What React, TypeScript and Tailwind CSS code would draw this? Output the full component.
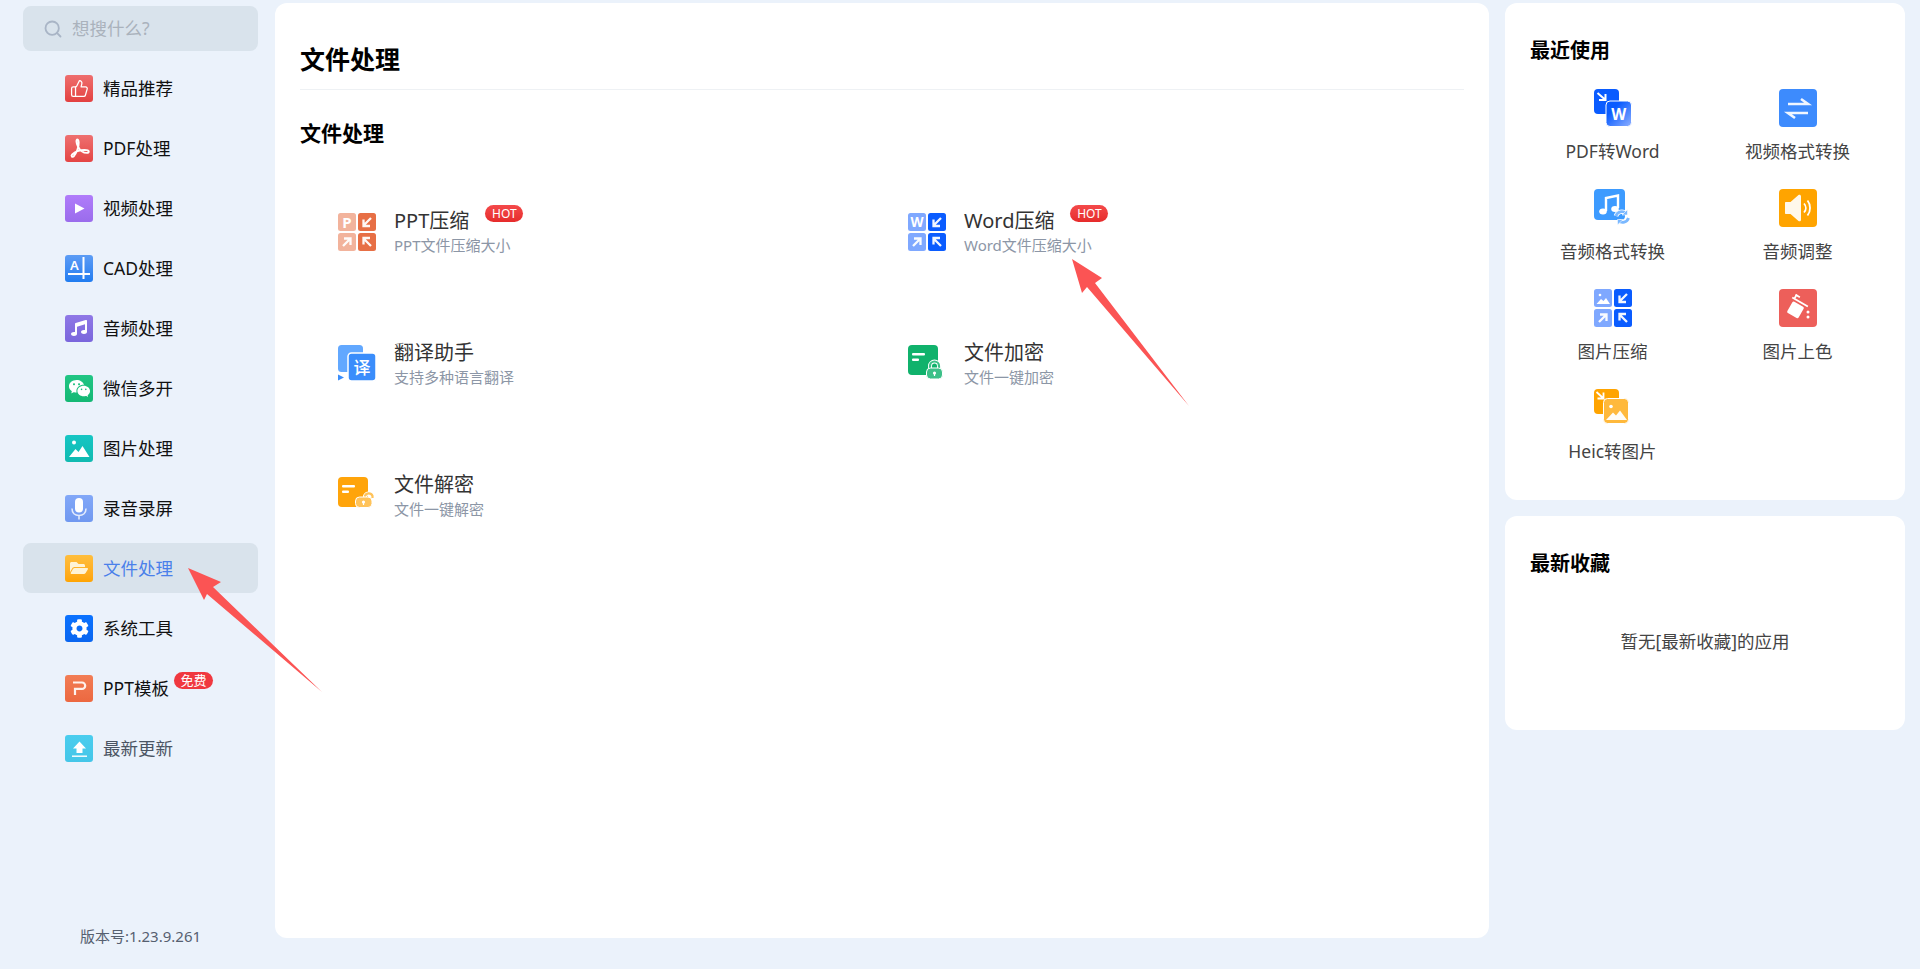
import React from 'react';
import { Search, ThumbsUp } from 'lucide-react';
import { FaCog, FaFolderOpen, FaMusic } from 'react-icons/fa';
import { RiWechatFill } from 'react-icons/ri';

const fontFamily = '"Noto Sans", "Noto Sans CJK SC", sans-serif';

// small white glyphs for the sidebar tiles, all on a 28 box
const PdfGlyph = () => (
  <svg viewBox="0 0 28 27" className="w-7 h-[27px]" fill="none" stroke="white" strokeWidth="1.9">
    <path d="M12.5 4.5c-1.6 0-1.2 3.5.4 6.8 2.2 4.4 5.6 6.6 9 6.6 2.4 0 2.6-2.6-.2-2.8-5.4-.4-11.5 1.4-14.5 4.4-1.6 1.7.2 3.2 1.5 1.8 2.6-2.8 5.3-9.3 5-13.8-.1-1.7-.5-2.9-1.7-3z" />
  </svg>
);

const CadGlyph = () => (
  <svg viewBox="0 0 28 27" className="w-7 h-[27px]" fill="white">
    <text x="5" y="15" fontSize="13" fontWeight="600" fontFamily={fontFamily}>A</text>
    <rect x="17.5" y="2" width="2" height="22" />
    <rect x="3" y="18" width="22" height="2" />
  </svg>
);

const ImageGlyph = () => (
  <svg viewBox="0 0 28 27" className="w-7 h-[27px]" fill="white">
    <circle cx="9" cy="7.5" r="2" />
    <path d="M4 22l6.5-8 3 3 4-6 7 11z" />
  </svg>
);

const MicGlyph = () => (
  <svg viewBox="0 0 28 27" className="w-7 h-[27px]">
    <rect x="10" y="3" width="8" height="14.5" rx="4" fill="white" />
    <path d="M7 13.5c0 4.5 3 7 7 7s7-2.5 7-7M14 20.5v4" fill="none" stroke="white" strokeOpacity="0.8" strokeWidth="1.6" />
  </svg>
);

const PptGlyph = () => (
  <svg viewBox="0 0 28 27" className="w-7 h-[27px]" fill="none" stroke="white" strokeOpacity="0.9" strokeWidth="2.2">
    <path d="M8 7.5h9a3.2 3.2 0 0 1 0 6.4h-7v6" />
  </svg>
);

const UploadGlyph = () => (
  <svg viewBox="0 0 27 27" className="w-[27px] h-[27px]" fill="white">
    <path d="M13.5 6.5l6.5 7h-3.5v4.5h-6v-4.5H7z" />
    <rect x="6" y="20.5" width="15" height="1.4" />
  </svg>
);

type NavItem = { label: string; tile: string; glyph: React.ReactNode; active?: boolean; badge?: string; muted?: boolean };

const navItems: NavItem[] = [
  { label: '精品推荐', tile: 'from-[#ee6e6e] to-[#e34040]', glyph: <ThumbsUp size={19} color="white" strokeWidth={1.6} /> },
  { label: 'PDF处理', tile: 'from-[#ee7070] to-[#e44444]', glyph: <PdfGlyph /> },
  { label: '视频处理', tile: 'from-[#b07cfa] to-[#9a6cec]', glyph: <svg viewBox="0 0 28 27" className="w-7 h-[27px]" fill="white"><path d="M10 8.5l9.5 5-9.5 5z" /></svg> },
  { label: 'CAD处理', tile: 'from-[#5c9cf5] to-[#1f7cf0]', glyph: <CadGlyph /> },
  { label: '音频处理', tile: 'from-[#8f78e6] to-[#7a66dc]', glyph: <FaMusic size={16} color="white" /> },
  { label: '微信多开', tile: 'from-[#20c584] to-[#14b874]', glyph: <RiWechatFill size={23} color="white" /> },
  { label: '图片处理', tile: 'from-[#16c6c4] to-[#10bab0]', glyph: <ImageGlyph /> },
  { label: '录音录屏', tile: 'from-[#82a8f8] to-[#7098f0]', glyph: <MicGlyph /> },
  { label: '文件处理', tile: 'from-[#ffbe3c] to-[#ffa400]', glyph: <FaFolderOpen size={18} color="#fff3d6" />, active: true },
  { label: '系统工具', tile: 'from-[#0a72ff] to-[#0a66f0]', glyph: <FaCog size={19} color="white" /> },
  { label: 'PPT模板', tile: 'from-[#f27d55] to-[#ec6840]', glyph: <PptGlyph />, badge: '免费' },
  { label: '最新更新', tile: 'from-[#4acdee] to-[#44c6e8]', glyph: <UploadGlyph />, muted: true },
];

// four tile "compress" icon, the top left tile content changes
const CompressIcon = ({ light, dark, children }: { light: string; dark: string; children: React.ReactNode }) => (
  <svg viewBox="0 0 38 38" className="w-[38px] h-[38px]">
    <rect x="0" y="0" width="18" height="18" rx="2.5" fill={light} />
    <rect x="20" y="0" width="18" height="18" rx="2.5" fill={dark} />
    <rect x="0" y="20" width="18" height="18" rx="2.5" fill={light} />
    <rect x="20" y="20" width="18" height="18" rx="2.5" fill={dark} />
    {children}
    <g fill="none" stroke="white" strokeWidth="2.3" strokeOpacity="0.95">
      <path d="M33 5l-7.5 7.5M25.5 6.5v6.5H32" />
      <path d="M5 33l7.5-7.5M6 25.5h6.5V32" />
      <path d="M33 33l-7.5-7.5M25.5 31.5v-6.5H32" />
    </g>
  </svg>
);

const PptCompress = () => (
  <CompressIcon light="#f2b39c" dark="#e76f45">
    <text x="9" y="14.5" textAnchor="middle" fontSize="15" fontWeight="700" fill="white" fontFamily={fontFamily}>P</text>
  </CompressIcon>
);

const WordCompress = () => (
  <CompressIcon light="#7fa8ff" dark="#0a5cff">
    <text x="9" y="14" textAnchor="middle" fontSize="13.5" fontWeight="700" fill="white" fontFamily={fontFamily}>W</text>
  </CompressIcon>
);

const ImageCompress = () => (
  <CompressIcon light="#7fa8ff" dark="#0a5cff">
    <circle cx="6" cy="6" r="1.3" fill="white" />
    <path d="M2.5 15l4.5-5 2.5 2 2.5-3 4 6z" fill="white" />
  </CompressIcon>
);

const TranslateIcon = () => (
  <svg viewBox="0 0 38 38" className="w-[38px] h-[38px]">
    <rect x="0" y="0" width="25" height="27" rx="3.5" fill="#62a8ff" />
    <rect x="10" y="8" width="28" height="28" rx="3.5" fill="#3a8dfb" stroke="white" strokeWidth="1.5" />
    <path d="M0 29.5l6 3-6 3z" fill="#3a8dfb" />
    <text x="24" y="28.5" textAnchor="middle" fontSize="17" fontWeight="500" fill="white" fontFamily={fontFamily}>译</text>
  </svg>
);

const FileLockIcon = ({ main, lock, open }: { main: string; lock: string; open?: boolean }) => {
  const shackle = open ? 'M27 21v-2a4 4 0 0 1 7.5 0v2' : 'M22 24v-3a4.5 4.5 0 0 1 9 0v3';
  const cx = open ? 25.5 : 26.5;
  const cy = open ? 25 : 28;
  return (
    <svg viewBox="0 0 38 38" className="w-[38px] h-[38px]">
      <rect x="0" y="0" width="30" height="30" rx="4" fill={main} />
      <rect x="4" y="8" width="13" height="2.5" rx="1" fill="white" />
      <rect x="4" y="13.5" width="7" height="2.5" rx="1" fill="white" />
      <path d={shackle} fill="none" stroke="white" strokeWidth="4" />
      <path d={shackle} fill="none" stroke={lock} strokeWidth="2.2" />
      <rect x={open ? 17.5 : 18.5} y={open ? 20 : 23} width={open ? 16.5 : 16} height={open ? 10.5 : 11} rx="4" fill={lock} stroke="white" strokeWidth="1" />
      <circle cx={cx} cy={cy} r="1.6" fill="white" />
      <rect x={cx - 0.6} y={cy} width="1.2" height="3" fill="white" />
    </svg>
  );
};

const PdfToWord = () => (
  <svg viewBox="0 0 38 38" className="w-[38px] h-[38px]">
    <defs>
      <linearGradient id="wordGrad" x1="0" y1="0" x2="1" y2="1">
        <stop offset="0.3" stopColor="#0a5cff" />
        <stop offset="1" stopColor="#8fb0ff" />
      </linearGradient>
    </defs>
    <rect x="0" y="0" width="25" height="25" rx="4" fill="#0a5cff" />
    <path d="M3.5 4l7.5 6.5M11.5 5v6H5" fill="none" stroke="white" strokeWidth="2" />
    <rect x="12" y="12" width="25.5" height="25.5" rx="4" fill="url(#wordGrad)" stroke="white" strokeWidth="1" />
    <text x="24.8" y="31" textAnchor="middle" fontSize="15.5" fontWeight="700" fill="white" fontFamily={fontFamily}>W</text>
  </svg>
);

const VideoConvert = () => (
  <svg viewBox="0 0 38 38" className="w-[38px] h-[38px]">
    <rect width="38" height="38" rx="4" fill="#3d8bfd" />
    <path d="M9 15h20l-7-5M29 24H9l7 5" fill="none" stroke="white" strokeWidth="2.6" strokeOpacity="0.92" />
  </svg>
);

const AudioConvert = () => {
  const arrows = 'M22 27a6 6 0 0 1 10-2.5M34.5 29a6 6 0 0 1-10 2.5';
  return (
    <svg viewBox="0 0 38 38" className="w-[38px] h-[38px]">
      <rect x="0" y="0" width="31" height="31" rx="4" fill="#3d9bff" />
      <path d="M12 22V9l12-2.5v12.5" fill="none" stroke="white" strokeWidth="2.4" />
      <ellipse cx="9" cy="22.5" rx="3.8" ry="3" fill="white" />
      <ellipse cx="21" cy="20" rx="3.8" ry="3" fill="white" />
      <path d={arrows} fill="none" stroke="white" strokeWidth="4.5" />
      <path d={arrows} fill="none" stroke="#7ab8ff" strokeWidth="2.8" />
      <path d="M33.5 20.5v5.5h-5.5zM23.5 36v-5.5h5.5z" fill="#7ab8ff" stroke="white" strokeWidth="0.6" />
    </svg>
  );
};

const SpeakerIcon = () => (
  <svg viewBox="0 0 38 38" className="w-[38px] h-[38px]">
    <rect width="38" height="38" rx="4" fill="#ffa400" />
    <path d="M7 13h4.5L19.5 6c1-.8 2.5-.2 2.5 1.2v23.6c0 1.4-1.5 2-2.5 1.2L11.5 25H7c-.6 0-1-.4-1-1V14c0-.6.4-1 1-1z" fill="white" fillOpacity="0.92" />
    <path d="M25 14.5c2.4 2.6 2.4 6.4 0 9M28.5 11.5c3.4 4.2 3.4 10.8 0 15" fill="none" stroke="white" strokeWidth="1.8" />
  </svg>
);

const PaintIcon = () => (
  <svg viewBox="0 0 38 38" className="w-[38px] h-[38px]">
    <rect width="38" height="38" rx="4" fill="#ed5f5a" />
    <g transform="rotate(30 17 20)" fill="white">
      <rect x="10.5" y="14.5" width="13" height="13" rx="1.5" />
      <rect x="8" y="11" width="18" height="1.8" />
      <rect x="9.5" y="7" width="1.8" height="4.5" />
      <rect x="9.5" y="7" width="5" height="1.8" />
    </g>
    <circle cx="29" cy="23" r="1.5" fill="white" />
    <circle cx="29" cy="28" r="1.5" fill="white" />
  </svg>
);

const HeicIcon = () => (
  <svg viewBox="0 0 38 38" className="w-[38px] h-[38px]">
    <rect x="0" y="0" width="25" height="25" rx="4" fill="#ffa400" />
    <path d="M2.5 3l6.5 6M9.5 3.5v6H3.5" fill="none" stroke="white" strokeWidth="1.8" />
    <rect x="9.5" y="9.5" width="25" height="25" rx="4" fill="#ffb93c" stroke="white" strokeWidth="1" />
    <circle cx="17" cy="17.5" r="1.8" fill="white" />
    <path d="M12 31l7-7.5 3 3 4-5 7 9.5z" fill="white" fillOpacity="0.95" />
  </svg>
);

const tools = [
  { title: 'PPT压缩', desc: 'PPT文件压缩大小', icon: <PptCompress />, hot: true },
  { title: 'Word压缩', desc: 'Word文件压缩大小', icon: <WordCompress />, hot: true },
  { title: '翻译助手', desc: '支持多种语言翻译', icon: <TranslateIcon /> },
  { title: '文件加密', desc: '文件一键加密', icon: <FileLockIcon main="#10b26c" lock="#3cc088" /> },
  { title: '文件解密', desc: '文件一键解密', icon: <FileLockIcon main="#ffa40a" lock="#ffc35a" open /> },
];

const recent = [
  { label: 'PDF转Word', icon: <PdfToWord /> },
  { label: '视频格式转换', icon: <VideoConvert /> },
  { label: '音频格式转换', icon: <AudioConvert /> },
  { label: '音频调整', icon: <SpeakerIcon /> },
  { label: '图片压缩', icon: <ImageCompress /> },
  { label: '图片上色', icon: <PaintIcon /> },
  { label: 'Heic转图片', icon: <HeicIcon /> },
];

const Sidebar = () => (
  <aside className="w-[275px] h-[969px] flex flex-col shrink-0 pl-[23px] pr-[17px] pt-[6px]">
    <div className="h-[45px] rounded-lg bg-[#d9e3ec] flex items-center pl-[20px] text-[17.5px] text-[#aab2bc]">
      <Search size={20} color="#a9b5c6" strokeWidth={2.2} />
      <span className="ml-[9px]">想搜什么?</span>
    </div>
    <nav className="mt-[12px] flex flex-col gap-[10px]">
      {navItems.map((item) => (
        <div
          key={item.label}
          className={`h-[50px] rounded-lg flex items-center pl-[42px] text-[17.5px] ${item.active ? 'bg-[#d9e3ec] text-[#4a80ea]' : item.muted ? 'text-[#4b5563]' : 'text-[#111]'}`}
        >
          <span className={`w-7 h-[27px] rounded-[3px] bg-linear-to-b ${item.tile} flex items-center justify-center shrink-0`}>
            {item.glyph}
          </span>
          <span className="ml-[10px]">{item.label}</span>
          {item.badge && (
            <span className="ml-[5px] -mt-[15px] w-[39px] h-[17px] rounded-full bg-[#f0383f] text-white text-[13px] leading-[17px] text-center">
              {item.badge}
            </span>
          )}
        </div>
      ))}
    </nav>
    <div className="mt-auto mb-[21px] text-center text-[15px] leading-[24px] text-[#566070]">版本号:1.23.9.261</div>
  </aside>
);

const MainPanel = () => (
  <main className="w-[1214px] h-[935px] bg-white rounded-xl px-[25px] pt-[39px] shrink-0">
    <div className="pb-[13px] border-b border-[#eef1f4]">
      <h1 className="text-[25px] leading-[34px] font-bold text-black">文件处理</h1>
    </div>
    <h2 className="mt-[28px] text-[21px] leading-[30px] font-bold text-black">文件处理</h2>
    <div className="mt-[60px] pl-[38px] grid grid-cols-[570px_1fr] auto-rows-[132px]">
      {tools.map((tool) => (
        <div key={tool.title} className="flex items-start">
          <div className="mt-[5px] shrink-0">{tool.icon}</div>
          <div className="ml-[18px]">
            <div className="flex items-start">
              <span className="text-[20px] leading-[26px] text-[#333]">{tool.title}</span>
              {tool.hot && (
                <span className="ml-[16px] -mt-[3px] w-[38px] h-[17px] rounded-full bg-linear-to-b from-[#f4494a] to-[#e62b2b] text-white text-[12px] leading-[17px] text-center">
                  HOT
                </span>
              )}
            </div>
            <div className="-mt-[2px] text-[15px] leading-[26px] text-[#8c96a6]">{tool.desc}</div>
          </div>
        </div>
      ))}
    </div>
  </main>
);

const RightColumn = () => (
  <div className="ml-[16px] w-[400px] flex flex-col gap-[16px] shrink-0">
    <section className="h-[497px] bg-white rounded-xl pt-[34px]">
      <h3 className="pl-[25px] text-[20px] leading-[28px] font-bold text-black">最近使用</h3>
      <div className="mt-[24px] px-[15px] grid grid-cols-2 auto-rows-[100px]">
        {recent.map((app) => (
          <div key={app.label} className="flex flex-col items-center">
            <div className="h-[38px]">{app.icon}</div>
            <div className="mt-[11px] text-[17.5px] leading-[26px] text-[#444]">{app.label}</div>
          </div>
        ))}
      </div>
    </section>
    <section className="h-[214px] bg-white rounded-xl pt-[34px]">
      <h3 className="pl-[25px] text-[20px] leading-[28px] font-bold text-black">最新收藏</h3>
      <p className="mt-[50px] text-center text-[17.5px] leading-[26px] text-[#444]">暂无[最新收藏]的应用</p>
    </section>
  </div>
);

export default function App() {
  return (
    <div className="relative w-full h-[969px] overflow-hidden bg-[#ebf2fb] flex items-start" style={{ fontFamily }}>
      <Sidebar />
      <div className="flex items-start pt-[3px]">
        <MainPanel />
        <RightColumn />
      </div>
      {/* red annotation arrows drawn over the page */}
      <svg className="absolute inset-0 w-[1920px] h-[969px] pointer-events-none" viewBox="0 0 1920 969" fill="#fb5454">
        <polygon points="188,568 221,582 213,587 322,692 207,594 204,600" />
        <polygon points="1072,259 1102,278 1095,283 1189,406 1087,287 1082,293" />
      </svg>
    </div>
  );
}
